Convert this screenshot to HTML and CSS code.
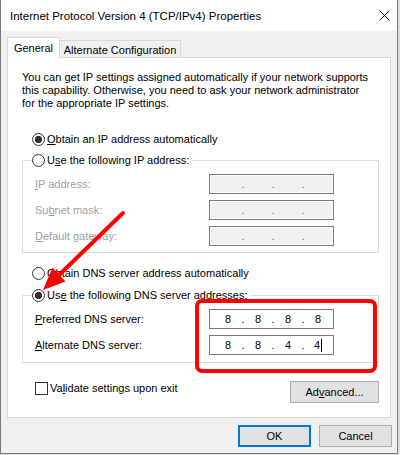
FILE: index.html
```html
<!DOCTYPE html>
<html lang="en">
<head>
<meta charset="utf-8">
<title>Internet Protocol Version 4 (TCP/IPv4) Properties</title>
<link rel="stylesheet" href="styles.css">
</head>
<body>
<div class="window">
  <div class="titlebar">
    <span class="title">Internet Protocol Version 4 (TCP/IPv4) Properties</span>
    <svg class="close" width="11" height="11" viewBox="0 0 11 11"><path d="M0.5 0.5L10.5 10.5M10.5 0.5L0.5 10.5" stroke="#000" stroke-width="1" fill="none"/></svg>
  </div>
  <div class="client">
    <div class="tabs">
      <div class="tab active">General</div>
      <div class="tab">Alternate Configuration</div>
    </div>
    <div class="panel">
      <p class="desc">You can get IP settings assigned automatically if your network supports<br>this capability. Otherwise, you need to ask your network administrator<br>for the appropriate IP settings.</p>

      <div class="opt first"><span class="radio checked"></span><span class="opt-text"><u>O</u>btain an IP address automatically</span></div>

      <fieldset class="group">
        <legend class="legend"><span class="opt"><span class="radio"></span><span class="opt-text">U<u>s</u>e the following IP address:</span></span></legend>
        <div class="row off"><span class="lbl"><u>I</u>P address:</span><span class="ip disabled"><span class="oct"></span><span class="dot">.</span><span class="oct"></span><span class="dot">.</span><span class="oct"></span><span class="dot">.</span><span class="oct"></span></span></div>
        <div class="row off"><span class="lbl">Su<u>b</u>net mask:</span><span class="ip disabled"><span class="oct"></span><span class="dot">.</span><span class="oct"></span><span class="dot">.</span><span class="oct"></span><span class="dot">.</span><span class="oct"></span></span></div>
        <div class="row off"><span class="lbl"><u>D</u>efault gateway:</span><span class="ip disabled"><span class="oct"></span><span class="dot">.</span><span class="oct"></span><span class="dot">.</span><span class="oct"></span><span class="dot">.</span><span class="oct"></span></span></div>
      </fieldset>

      <div class="opt dns-auto"><span class="radio"></span><span class="opt-text">O<u>b</u>tain DNS server address automatically</span></div>

      <fieldset class="group dns">
        <legend class="legend"><span class="opt"><span class="radio checked"></span><span class="opt-text">Us<u>e</u> the following DNS server addresses:</span></span></legend>
        <div class="row"><span class="lbl"><u>P</u>referred DNS server:</span><span class="ip"><span class="oct">8</span><span class="dot">.</span><span class="oct">8</span><span class="dot">.</span><span class="oct">8</span><span class="dot">.</span><span class="oct">8</span></span></div>
        <div class="row"><span class="lbl"><u>A</u>lternate DNS server:</span><span class="ip"><span class="oct">8</span><span class="dot">.</span><span class="oct">8</span><span class="dot">.</span><span class="oct">4</span><span class="dot">.</span><span class="oct">4<span class="caret"></span></span></span></div>
      </fieldset>

      <div class="bottom-row">
        <label class="check"><span class="box"></span><span>Va<u>l</u>idate settings upon exit</span></label>
        <button class="btn adv">Ad<u>v</u>anced...</button>
      </div>
    </div>
    <div class="footer">
      <button class="btn default">OK</button>
      <button class="btn">Cancel</button>
    </div>
  </div>

  <div class="redbox"></div>
  <svg class="arrow" width="400" height="455" viewBox="0 0 400 455">
    <line x1="123" y1="213" x2="58" y2="276" stroke="#ff0000" stroke-width="4" stroke-linecap="round"/>
    <polygon points="43,290 52.5,267.5 65.5,281.5" fill="#ff0000"/>
  </svg>
</div>
</body>
</html>
```

FILE: styles.css
```css
* { box-sizing: border-box; }

html, body {
  margin: 0;
  padding: 0;
}

body {
  background: #dcdcdc;
  width: 400px;
  height: 455px;
  overflow: hidden;
  font-family: "Liberation Sans", Arial, sans-serif;
  font-size: 11px;
  color: #000;
}

.window {
  position: relative;
  width: 398px;
  height: 454px;
  background: #f0f0f0;
  border-left: 1px solid #7a7a7a;
  border-right: 1px solid #7a7a7a;
  border-bottom: 1px solid #7a7a7a;
}

.titlebar {
  height: 31px;
  background: #fff;
  display: flex;
  align-items: center;
  padding-left: 9px;
  padding-right: 7px;
}

.title {
  font-size: 11.5px;
  line-height: 16px;
}

.close {
  margin-left: auto;
  display: block;
}

.client {
  padding: 6px 5px 0 6px;
}

.tabs {
  display: flex;
  align-items: flex-end;
  height: 20px;
}

.tab {
  border: 1px solid #d9d9d9;
  border-bottom: none;
  line-height: 14px;
  text-align: center;
  white-space: nowrap;
}

.tab.active {
  position: relative;
  z-index: 1;
  width: 53px;
  height: 21px;
  margin-bottom: -1px;
  padding-top: 3px;
  background: #fff;
}

.tab:not(.active) {
  width: 121px;
  height: 17px;
  padding-top: 2px;
  border-left: none;
  background: #f0f0f0;
}

.panel {
  width: 384px;
  background: #fff;
  border: 1px solid #d9d9d9;
  padding: 13px 11px 14px 14px;
}

.desc {
  margin: 0;
  line-height: 13px;
  white-space: nowrap;
}

.opt {
  display: flex;
  align-items: center;
  height: 14px;
  line-height: 14px;
  white-space: nowrap;
}

.opt.first { margin: 22px 0 0 10px; }
.opt.dns-auto { margin: 13px 0 0 10px; }

.opt-text { margin-left: 2px; }

.radio {
  display: block;
  width: 13px;
  height: 13px;
  border: 1px solid #333;
  border-radius: 50%;
  background: #fff;
  flex: none;
}

.radio.checked {
  background: radial-gradient(circle, #333 0 3.4px, #fff 3.9px);
}

.group {
  margin: 7px 0 0 0;
  padding: 7px 12px 6px 12px;
  border: 1px solid #dcdcdc;
  min-width: 0;
}

.group.dns {
  margin-top: 8px;
  padding-bottom: 7px;
}

.legend {
  padding: 0 3px 0 0;
  margin-left: -3px;
  line-height: 14px;
}

.legend .opt { display: inline-flex; vertical-align: top; }

.row {
  display: flex;
  align-items: center;
  height: 20px;
  white-space: nowrap;
}

.row + .row { margin-top: 6px; }

.row.off { color: #a0a0a0; }

.lbl {
  flex: 0 0 174px;
}

.ip {
  display: flex;
  align-items: center;
  width: 125px;
  height: 20px;
  padding-left: 6px;
  border: 1px solid #7a7a7a;
  background: #fff;
  color: #000;
  font-family: "Liberation Sans", Arial, sans-serif;
}

.ip.disabled {
  background: #f0f0f0;
  box-shadow: inset 0 0 0 1px #fff;
  color: #6d6d80;
}

.oct {
  width: 24px;
  text-align: center;
  line-height: 14px;
}

.dot {
  width: 6px;
  text-align: center;
  line-height: 14px;
}

.caret {
  display: inline-block;
  width: 1px;
  height: 13px;
  background: #000;
  vertical-align: -3px;
  margin-left: 1px;
}

.bottom-row {
  display: flex;
  justify-content: space-between;
  align-items: flex-start;
  margin-top: 18px;
}

.check {
  display: flex;
  align-items: center;
  margin: 1px 0 0 13px;
  line-height: 13px;
  white-space: nowrap;
}

.check .box {
  display: block;
  width: 13px;
  height: 13px;
  border: 1px solid #333;
  background: #fff;
  margin-right: 2px;
}

.btn {
  font-family: "Liberation Sans", Arial, sans-serif;
  font-size: 11px;
  color: #000;
  height: 22px;
  background: #e1e1e1;
  border: 1px solid #adadad;
  padding: 0;
  margin: 0;
  line-height: 14px;
}

.btn.adv { width: 89px; }

.footer {
  display: flex;
  justify-content: flex-end;
  gap: 8px;
  margin-top: 7px;
}

.footer .btn { width: 73px; }

.btn.default {
  border: 2px solid #0078d7;
}

.redbox {
  position: absolute;
  left: 194px;
  top: 299px;
  width: 182px;
  height: 74px;
  border: 4px solid #ff0000;
  border-radius: 7px;
  pointer-events: none;
}

.arrow {
  position: absolute;
  left: -1px;
  top: 0;
  pointer-events: none;
}
```
